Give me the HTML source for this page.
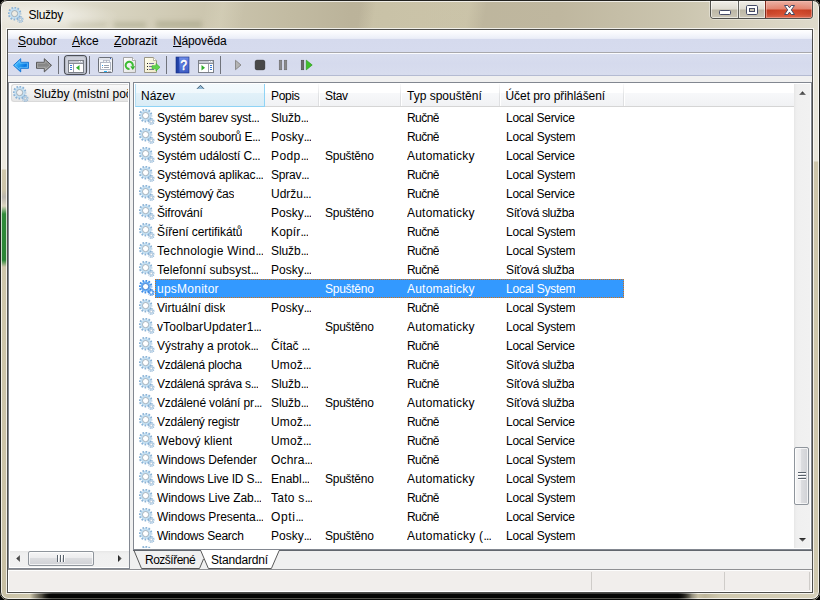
<!DOCTYPE html>
<html lang="cs"><head><meta charset="utf-8"><title>Služby</title>
<style>
*,*::before,*::after{box-sizing:border-box;margin:0;padding:0}
html,body{width:820px;height:600px;overflow:hidden;background:#000}
body{font-family:"Liberation Sans","DejaVu Sans",sans-serif;font-size:12px;color:#000;position:relative}
.abs{position:absolute}
/* ---------- window frame ---------- */
#frame{left:0;top:0;width:820px;height:600px;border-radius:7px 7px 8px 8px;overflow:hidden;background:#cdc5aa}
#ftop{left:0;top:0;width:820px;height:30px;background:linear-gradient(90deg,#e8e5da 0px,#e5e2d5 55px,#d9d5c2 105px,#cec8b1 190px,#c2bba2 290px,#bbb39a 350px,#bdb59c 420px,#bfb79f 560px,#cbc5af 680px,#d8d3c1 760px,#dedacb 820px)}
#fleft{left:0;top:30px;width:8px;height:570px;background:linear-gradient(#ece9df 0,#ece9df 139px,#cfc7ab 140px,#cbc3a8 160px,#b9b6ae 167px,#dcd6c2 176px,#2f8a3a 184px,#2a8535 230px,#cfc7ab 237px,#cac2a6 520px,#c6bea2 570px)}
#fright{left:812px;top:30px;width:8px;height:570px;background:linear-gradient(#e9e6da 0,#e9e6da 131px,#cdc5aa 132px,#cfc8ae 570px)}
#fbot{left:0;top:592px;width:820px;height:8px;background:linear-gradient(90deg,#c9c1a5 0,#cfc8ae 30px,#a49d86 42px,#0a0a08 50px,#000 675px,#5a5648 683px,#cfc8ae 692px,#bdb59a 705px,#cfc8ae 720px,#d6d0ba 820px)}
#rim{left:0;top:0;width:820px;height:600px;border-radius:7px 7px 8px 8px;border:1px solid #22221f;box-shadow:inset 0 0 0 1px rgba(255,255,255,.72)}
#inner{left:6px;top:28px;width:808px;height:566px;border:1px solid rgba(255,255,255,.75)}
#inner2{left:7px;top:29px;width:806px;height:564px;border:1px solid #4e4e4c}
#client{left:8px;top:30px;width:804px;height:562px;background:#f0f0f0}
#title{left:28.500px;top:7px;font-size:12px;line-height:16px;color:#000;letter-spacing:-.25px}
#titleglow{left:0px;top:2px;width:120px;height:27px;background:radial-gradient(ellipse at 40% 50%,rgba(255,255,255,.5),rgba(255,255,255,0) 70%)}
/* ---------- menu / toolbar ---------- */
#menubar{left:8px;top:30px;width:804px;height:22px;background:linear-gradient(#ffffff 0px,#f9fafd 3px,#eceff8 8px,#e6e9f5 9px,#d5daed 9px,#d6dbee 22px)}
#menuline{left:8px;top:52px;width:804px;height:1px;background:#a8a8ac}
.mi{position:absolute;top:33px;line-height:16px;font-size:12px}
.mi u{text-decoration:underline;text-underline-offset:1px}
#toolbar{left:8px;top:53px;width:804px;height:23px;background:linear-gradient(#fbfcfe 0px,#fbfcfe 1px,#d9deef 1px,#d5daed 10px,#d8ddee 22px,#b4bbd2 22px,#b4bbd2 23px)}
/* ---------- panels ---------- */
#tree{left:8px;top:82px;width:122px;height:487px;background:#fff;border:1px solid #828790}
#treeitem{left:11px;top:84px;width:117px;height:18px;border:1px solid #d9d9d9;border-right:none;border-radius:3px 0 0 3px;background:linear-gradient(#f9f9f9,#e6e6e6)}
#treetext{left:33.500px;top:86px;line-height:16px;width:94.500px;letter-spacing:-.02px;overflow:hidden;white-space:nowrap}
#list{left:133px;top:82px;width:679px;height:468px;background:#fff;border:1px solid #828790}
#hdr{left:135px;top:84px;width:659px;height:23px;background:linear-gradient(#fff 0,#fff 9px,#f7f8fa 9px,#f1f2f4 22px);border-bottom:1px solid #d5d5d5}
#hdrsort{left:135px;top:84px;width:130px;height:23px;background:linear-gradient(#f3fafd 0,#f0f8fc 9px,#e2f1f9 9px,#d9ecf6 22px);border:1px solid #8fd3f5;border-top:none;border-left-color:#b5e0f6}
.hsep{position:absolute;top:84px;width:2px;height:22px;background:linear-gradient(90deg,#dfe0e2 0,#dfe0e2 1px,#fff 1px);-webkit-mask-image:linear-gradient(transparent,#000 50%);mask-image:linear-gradient(rgba(0,0,0,.2),#000 60%)}
.ht{position:absolute;top:88px;line-height:16px;color:#000}
.row{position:absolute;left:134px;width:490px;height:19px;line-height:20px;white-space:nowrap}
.row .gear{position:absolute;left:5px;top:1px}
.c{position:absolute;top:0;height:19px;overflow:hidden}
.c1{left:23px}.c2{left:137px}.c3{left:191px}.c4{left:273px}.c5{left:372px}
.e{letter-spacing:-.75px !important}
.row.sel::before{content:"";position:absolute;left:21px;top:0;width:469px;height:19px;background:#3399ff;border:1px dotted #d07018}
.row.sel .c{color:#fff}
#vscroll{left:794px;top:84px;width:16px;height:464px;background:linear-gradient(90deg,#e6e6e6 0,#eeeeee 2px,#f0f0f0 4px,#f1f1f1 16px)}
#vthumb{left:794px;top:447px;width:15px;height:58px;border:1px solid #8f959c;border-radius:2px;background:linear-gradient(90deg,#f6f6f6 0,#ececee 45%,#dcdde0 50%,#d0d1d5 100%);box-shadow:inset 0 0 0 1px rgba(255,255,255,.7)}
.grip{position:absolute;left:798px;width:8px;height:2px;background:#59626c;border-bottom:1px solid #fff}
#hscroll{left:10px;top:551px;width:119px;height:16px;background:linear-gradient(#e6e6e6 0,#eeeeee 2px,#f0f0f0 4px,#f1f1f1 16px)}
#hthumb{left:28px;top:551px;width:66px;height:15px;border:1px solid #8f959c;border-radius:2px;background:linear-gradient(#f6f6f6 0,#ececee 45%,#dcdde0 50%,#d0d1d5 100%);box-shadow:inset 0 0 0 1px rgba(255,255,255,.7)}
.vgrip{position:absolute;top:555px;width:2px;height:7px;background:#59626c;border-right:1px solid #fff}
#tabs{left:133px;top:550px;width:679px;height:18px;background:#f0f0f0}
#botline{left:8px;top:569px;width:804px;height:1px;background:#8f9093}
#botline2{left:8px;top:570px;width:804px;height:1px;background:#fdfdfd}
#status{left:8px;top:571px;width:804px;height:21px;background:#f1eeec;border:1px solid #fff;border-top:none}
.ssep{position:absolute;top:572px;width:1px;height:18px;background:#cfccc9}
.tab{position:absolute;top:552px;line-height:16px}
/* caption buttons */
#capbtns{left:710px;top:0;width:103px;height:19px;border:1px solid #50504c;border-top:none;border-radius:0 0 4px 4px;overflow:hidden;background:#d6d2c4;box-shadow:0 0 0 1px rgba(255,255,255,.35)}
.cb{position:absolute;top:1px;height:17px;box-shadow:inset 0 0 0 1px rgba(255,255,255,.55)}
#bmin{left:0;width:28px;background:linear-gradient(#f0eee8 0,#dfdcd2 8px,#bcb7a6 9px,#cbc6b6 17px);border-right:1px solid #60605c}
#bmax{left:28px;width:27px;background:linear-gradient(#f0eee8 0,#dfdcd2 8px,#bcb7a6 9px,#cbc6b6 17px);border-right:1px solid #60605c}
#bclose{left:55px;width:46px;background:radial-gradient(ellipse 60% 70% at 50% 75%,rgba(255,100,60,.38),rgba(255,100,60,0) 100%),linear-gradient(#ecb0a2 0,#df8a78 8px,#bf3a20 9px,#c5452b 13px,#d26a54 17px);box-shadow:inset 0 0 0 1px rgba(255,200,190,.45),0 0 0 1px #7e2a1c}
</style></head><body>
<svg width="0" height="0" style="position:absolute"><defs>

<linearGradient id="arv" x1="0" y1="0" x2="0" y2="1"><stop offset="0" stop-color="#1e1e1e"/><stop offset="1" stop-color="#7a7a7a"/></linearGradient><linearGradient id="arh" x1="0" y1="0" x2="1" y2="0"><stop offset="0" stop-color="#1e1e1e"/><stop offset="1" stop-color="#6a6a6a"/></linearGradient>
</defs></svg>
<div id="frame" class="abs">
 <div id="ftop" class="abs"></div><div id="fleft" class="abs"></div><div id="fright" class="abs"></div><div id="fbot" class="abs"></div>
</div>
<div class="abs" style="left:330px;top:0;width:170px;height:30px;background:linear-gradient(100deg,rgba(255,250,215,0) 18%,rgba(255,250,215,.2) 27%,rgba(255,250,215,.2) 80%,rgba(255,250,215,0) 90%)"></div>
<div class="abs" style="left:190px;top:0;width:70px;height:30px;background:linear-gradient(100deg,rgba(255,252,230,0) 20%,rgba(255,252,230,.14) 45%,rgba(255,252,230,0) 75%)"></div>
<div class="abs" style="left:70px;top:22px;width:36px;height:5px;background:#a9a88c;opacity:.32;filter:blur(2.500px)"></div>
<div class="abs" style="left:114px;top:22px;width:32px;height:6px;background:#a3a284;opacity:.5;filter:blur(2.500px)"></div>
<div class="abs" style="left:156px;top:21px;width:46px;height:7px;background:#9f9e80;opacity:.5;filter:blur(2.500px)"></div>
<div id="rim" class="abs"></div>
<div id="inner" class="abs"></div>
<div id="inner2" class="abs"></div>
<div class="abs" style="left:30px;top:593px;width:670px;height:7px;background:linear-gradient(#3c3c3a 0,#3c3c3a 1px,#050504 1px,#050504 5px,#55554f 5px,#55554f 6px,#0a0a0a 6px);-webkit-mask-image:linear-gradient(90deg,transparent 0,#000 22px,#000 648px,transparent 668px);mask-image:linear-gradient(90deg,transparent 0,#000 22px,#000 648px,transparent 668px)"></div>
<div id="titleglow" class="abs"></div>
<svg class="abs" style="left:8px;top:7px" width="16" height="16" viewBox="0 0 16 16"><circle cx="6.600" cy="6.600" r="5.750" fill="none" stroke="#8ab2d5" stroke-width="2.100" stroke-dasharray="1.700 1.311" stroke-dashoffset=".85"/><circle cx="6.600" cy="6.600" r="4.050" fill="none" stroke="#c6e2f4" stroke-width="1.900"/><circle cx="6.600" cy="6.600" r="4.950" fill="none" stroke="#a5cbe9" stroke-width=".4"/><circle cx="6.600" cy="6.600" r="3.100" fill="none" stroke="#7d8a98" stroke-width=".7" stroke-opacity=".85"/><circle cx="12.300" cy="12.500" r="2.700" fill="none" stroke="#88aed0" stroke-width="1.400" stroke-dasharray=".95 .746" stroke-dashoffset=".475"/><circle cx="12.300" cy="12.500" r="1.750" fill="none" stroke="#b2d0e8" stroke-width="1.100"/><circle cx="12.300" cy="12.500" r="1.150" fill="none" stroke="#8c9db0" stroke-width=".35"/></svg>
<div id="title" class="abs">Služby</div>
<div id="capbtns" class="abs">
 <div id="bmin" class="cb"></div><div id="bmax" class="cb"></div><div id="bclose" class="cb"></div>
 <svg class="abs" style="left:0;top:0" width="103" height="20" viewBox="0 0 103 20">
  <rect x="8.500" y="10.500" width="11" height="4" rx=".8" fill="#fff" stroke="#454b66" stroke-width="1"/>
  <rect x="35.500" y="5.500" width="11" height="9" rx="1.200" fill="#fff" stroke="#454b66" stroke-width="1"/>
  <rect x="38.500" y="8.500" width="5" height="3" fill="#cbc6b4" stroke="#454b66" stroke-width="1"/>
  <path d="M73.500 5.500 L76.800 5.500 L78.500 7.800 L80.200 5.500 L83.500 5.500 L80.300 9.900 L83.500 14.500 L80.200 14.500 L78.500 12.100 L76.800 14.500 L73.500 14.500 L76.700 9.900 Z" fill="#fff" stroke="#454b66" stroke-width="1" stroke-linejoin="round"/>
 </svg>
</div>
<div class="abs" style="left:706px;top:0;width:108px;height:1px;background:#2a2a28"></div>
<div id="client" class="abs"></div>
<div id="menubar" class="abs"></div>
<div id="menuline" class="abs"></div>
<span class="mi" style="left:18px"><u>S</u>oubor</span>
<span class="mi" style="left:72px"><u>A</u>kce</span>
<span class="mi" style="left:114px"><u>Z</u>obrazit</span>
<span class="mi" style="left:173px;letter-spacing:-.15px"><u>N</u>ápověda</span>
<div id="toolbar" class="abs"></div>
<svg class="abs" style="left:0;top:0" width="820" height="90" viewBox="0 0 820 90">
<defs>
<linearGradient id="gb" x1="0" y1="0" x2="1" y2=".6"><stop offset="0" stop-color="#6ccfff"/><stop offset=".45" stop-color="#2aa4f6"/><stop offset=".8" stop-color="#0a78e2"/><stop offset="1" stop-color="#2a94f0"/></linearGradient>
<linearGradient id="gg" x1="0" y1="0" x2="0" y2="1"><stop offset="0" stop-color="#8a8a8a"/><stop offset=".5" stop-color="#868686"/><stop offset="1" stop-color="#b4b4b4"/></linearGradient>
<linearGradient id="gq" x1="0" y1="0" x2="1" y2="0"><stop offset="0" stop-color="#1c3c9c"/><stop offset=".25" stop-color="#2747b0"/><stop offset=".3" stop-color="#5f7fe0"/><stop offset="1" stop-color="#4868d0"/></linearGradient>
<linearGradient id="gpg" x1="0" y1="0" x2="1" y2="1"><stop offset="0" stop-color="#ffffff"/><stop offset="1" stop-color="#e0e0e0"/></linearGradient>
<linearGradient id="gpy" x1="0" y1="0" x2="1" y2="1"><stop offset="0" stop-color="#fffef0"/><stop offset="1" stop-color="#efe8c4"/></linearGradient>
<linearGradient id="gqv" x1="0" y1="0" x2="0" y2="1"><stop offset="0" stop-color="#7a98f0" stop-opacity=".7"/><stop offset=".5" stop-color="#5676dc" stop-opacity=".3"/><stop offset="1" stop-color="#2c48b0" stop-opacity=".6"/></linearGradient>
</defs>
<!-- back / forward -->
<path d="M13.500 65.300 L20.700 58.700 L20.700 62.300 L28.500 62.300 L28.500 68.300 L20.700 68.300 L20.700 71.900 Z" fill="url(#gb)" stroke="#1a78d6" stroke-width="1" stroke-linejoin="round"/>
<path d="M15 65.300 L19.800 60.900 L19.800 63.200 L27.600 63.200 L27.600 67.400 L19.800 67.400 L19.800 69.700 Z" fill="none" stroke="#7fd2ff" stroke-opacity=".75" stroke-width=".8" stroke-linejoin="round"/>
<path d="M51.500 65.300 L44.300 58.700 L44.300 62.300 L36.500 62.300 L36.500 68.300 L44.300 68.300 L44.300 71.900 Z" fill="url(#gg)" stroke="#565656" stroke-width="1" stroke-linejoin="round"/>
<path d="M50 65.300 L45.200 60.900 L45.200 63.200 L37.400 63.200 L37.400 67.400 L45.200 67.400 L45.200 69.700 Z" fill="none" stroke="#c4c4c4" stroke-opacity=".6" stroke-width=".8" stroke-linejoin="round"/>
<!-- separators -->
<g fill="#70737c"><rect x="58" y="56" width="1" height="18"/><rect x="89" y="56" width="1" height="18"/><rect x="166" y="56" width="1" height="18"/><rect x="220" y="56" width="1" height="18"/></g>
<!-- pressed button -->
<rect x="64.500" y="55.500" width="22" height="19" rx="3.500" fill="#cdd0da" stroke="#4c4f56" stroke-width="1.200"/>
<rect x="65.500" y="56.500" width="20" height="17" rx="2.500" fill="none" stroke="#b4b8c4" stroke-width="1"/>
<!-- show/hide console tree icon -->
<g>
<rect x="68.500" y="60.500" width="15" height="12" fill="#fff" stroke="#7c8088"/>
<rect x="69" y="61" width="14" height="2" fill="#c4c8d2"/>
<rect x="69" y="63" width="14" height="1" fill="#8a8e98"/>
<rect x="73" y="64" width="1" height="8" fill="#9a9ea8"/>
<rect x="70" y="65" width="2" height="1" fill="#3a7ad8"/><rect x="70" y="67" width="2" height="1" fill="#3a7ad8"/><rect x="70" y="69" width="2" height="1" fill="#3a7ad8"/>
<path d="M79.500 65 L76 67.700 L79.500 70.500 Z" fill="#2fae2a"/>
<rect x="79" y="61" width="1" height="1" fill="#fff"/><rect x="81" y="61" width="1" height="1" fill="#fff"/>
</g>
<!-- properties icon -->
<g>
<rect x="98.500" y="57.500" width="14" height="15" rx="1" fill="#f4f5f8" stroke="#6c7078"/>
<rect x="99" y="58" width="13" height="2" fill="#dfe2ea"/>
<rect x="110" y="58" width="1" height="1" fill="#3a6ad0"/>
<rect x="100.500" y="62.500" width="10" height="7" fill="#fff" stroke="#b0b6c4"/>
<rect x="103.500" y="60.500" width="3" height="2" fill="#f4f5f8" stroke="#b0b6c4" stroke-width=".8"/><rect x="106.500" y="60.500" width="3" height="2" fill="#f4f5f8" stroke="#b0b6c4" stroke-width=".8"/>
<rect x="102" y="65" width="1" height="1" fill="#2a9cf0"/><rect x="104" y="65" width="5" height="1" fill="#9aa0ae"/>
<rect x="102" y="67" width="1" height="1" fill="#9aa0ae"/><rect x="104" y="67" width="5" height="1" fill="#9aa0ae"/>
<rect x="104" y="71" width="3" height="1" fill="#28b0f0"/><rect x="108" y="71" width="3" height="1" fill="#b8bcc6"/>
</g>
<!-- refresh -->
<g>
<path d="M123.500 57.500 L132.500 57.500 L135.500 60.500 L135.500 72.500 L123.500 72.500 Z" fill="url(#gpg)" stroke="#a4a4a4"/>
<path d="M132.500 57.500 L132.500 60.500 L135.500 60.500" fill="#fff" stroke="#9a9a9a" stroke-width=".8"/>
<path d="M132.800 66 A3.600 3.600 0 1 0 129.500 69" fill="none" stroke="#3cbc34" stroke-width="2"/>
<path d="M130.300 66.300 L135.200 66.300 L132.800 70 Z" fill="#34b42c"/>
</g>
<!-- export list -->
<g>
<path d="M144.500 57.500 L153.500 57.500 L156.500 60.500 L156.500 72.500 L144.500 72.500 Z" fill="url(#gpy)" stroke="#9a9684"/>
<path d="M153.500 57.500 L153.500 60.500 L156.500 60.500" fill="#fff" stroke="#a8a494" stroke-width=".8"/>
<rect x="147" y="63" width="1" height="1" fill="#222"/><rect x="147" y="66" width="1" height="1" fill="#222"/><rect x="147" y="69" width="1" height="1" fill="#222"/>
<rect x="149" y="63" width="5" height="1" fill="#76749e"/><rect x="149" y="66" width="4" height="1" fill="#76749e"/><rect x="149" y="69" width="5" height="1" fill="#76749e"/>
<path d="M152 65.700 L156 65.700 L156 63.500 L160 67.200 L156 71 L156 68.800 L152 68.800 Z" fill="#62d44e" stroke="#38b02c" stroke-width=".6"/>
</g>
<!-- help -->
<g>
<rect x="176" y="57" width="13" height="16" fill="url(#gq)"/>
<rect x="179" y="57" width="10" height="16" fill="url(#gqv)"/>
<rect x="176" y="57" width="13" height="16" fill="none" stroke="#1a3088" stroke-width=".6"/>
<text transform="translate(184.300 70.600) scale(.78 1)" font-family="Liberation Sans, sans-serif" font-size="14.800" fill="#1c2f80" fill-opacity=".55" text-anchor="middle">?</text>
<text transform="translate(183.600 70.100) scale(.78 1)" font-family="Liberation Sans, sans-serif" font-size="14.800" fill="#fff" stroke="#fff" stroke-width=".7" text-anchor="middle">?</text>
</g>
<!-- action pane icon -->
<g>
<rect x="198.500" y="60.500" width="15" height="12" fill="#fff" stroke="#7c8088"/>
<rect x="199" y="61" width="14" height="2" fill="#c4c8d2"/>
<rect x="199" y="63" width="14" height="1" fill="#8a8e98"/>
<rect x="208" y="64" width="1" height="8" fill="#9a9ea8"/>
<rect x="210" y="65" width="2" height="1" fill="#3a7ad8"/><rect x="210" y="67" width="2" height="1" fill="#3a7ad8"/><rect x="210" y="69" width="2" height="1" fill="#3a7ad8"/>
<path d="M201.500 65 L205 67.700 L201.500 70.500 Z" fill="#2fae2a"/>
<rect x="209" y="61" width="1" height="1" fill="#fff"/><rect x="211" y="61" width="1" height="1" fill="#fff"/>
</g>
<!-- play (disabled) -->
<path d="M235.500 60.300 L241 65 L235.500 69.700 Z" fill="#b4b4b4" stroke="#848484" stroke-width=".9"/>
<!-- stop -->
<rect x="255.300" y="60.300" width="9.400" height="9.400" rx="1.500" fill="#484848" stroke="#303030" stroke-width=".8"/>
<!-- pause -->
<rect x="279.300" y="60.300" width="2.400" height="9.400" fill="#8a8a8a" stroke="#6e6e6e" stroke-width=".7"/>
<rect x="284.300" y="60.300" width="2.400" height="9.400" fill="#8a8a8a" stroke="#6e6e6e" stroke-width=".7"/>
<!-- resume -->
<rect x="301.300" y="60.300" width="2.400" height="9.400" fill="#6a6a6a" stroke="#4e4e4e" stroke-width=".7"/>
<path d="M306.300 60.200 L312.200 65 L306.300 69.800 Z" fill="#3fc02a" stroke="#2a9a1a" stroke-width=".7"/>
</svg>

<div id="tree" class="abs"></div>
<div id="treeitem" class="abs"></div>
<svg class="abs" style="left:13px;top:86px" width="16" height="16" viewBox="0 0 16 16"><circle cx="6.600" cy="6.600" r="5.750" fill="none" stroke="#8ab2d5" stroke-width="2.100" stroke-dasharray="1.700 1.311" stroke-dashoffset=".85"/><circle cx="6.600" cy="6.600" r="4.050" fill="none" stroke="#c6e2f4" stroke-width="1.900"/><circle cx="6.600" cy="6.600" r="4.950" fill="none" stroke="#a5cbe9" stroke-width=".4"/><circle cx="6.600" cy="6.600" r="3.100" fill="none" stroke="#7d8a98" stroke-width=".7" stroke-opacity=".85"/><circle cx="12.300" cy="12.500" r="2.700" fill="none" stroke="#88aed0" stroke-width="1.400" stroke-dasharray=".95 .746" stroke-dashoffset=".475"/><circle cx="12.300" cy="12.500" r="1.750" fill="none" stroke="#b2d0e8" stroke-width="1.100"/><circle cx="12.300" cy="12.500" r="1.150" fill="none" stroke="#8c9db0" stroke-width=".35"/></svg>
<div id="treetext" class="abs">Služby (místní počítač)</div>
<div id="list" class="abs"></div>
<div id="hdr" class="abs"></div>
<div id="hdrsort" class="abs"></div>
<div class="hsep" style="left:318px"></div>
<div class="hsep" style="left:400px"></div>
<div class="hsep" style="left:499px"></div>
<div class="hsep" style="left:623px"></div>
<svg class="abs" style="left:196px;top:84px" width="9" height="6" viewBox="0 0 9 6"><path d="M1.200 5 L4.500 1.600 L7.800 5 Z" fill="#93bbd6"/><path d="M1 4.800 L4.500 1.300 L8 4.800" fill="none" stroke="#38566f" stroke-width="1"/></svg>
<span class="ht" style="left:141px">Název</span>
<span class="ht" style="left:271px;letter-spacing:-.3px">Popis</span>
<span class="ht" style="left:325px;letter-spacing:-.35px">Stav</span>
<span class="ht" style="left:407px">Typ spouštění</span>
<span class="ht" style="left:505.500px;letter-spacing:-.06px">Účet pro přihlášení</span>
<div class="row" style="top:108px"><svg class="gear" width="16" height="16" viewBox="0 0 16 16"><circle cx="6.600" cy="6.600" r="5.750" fill="none" stroke="#8ab2d5" stroke-width="2.100" stroke-dasharray="1.700 1.311" stroke-dashoffset=".85"/><circle cx="6.600" cy="6.600" r="4.050" fill="none" stroke="#c6e2f4" stroke-width="1.900"/><circle cx="6.600" cy="6.600" r="4.950" fill="none" stroke="#a5cbe9" stroke-width=".4"/><circle cx="6.600" cy="6.600" r="3.100" fill="none" stroke="#7d8a98" stroke-width=".7" stroke-opacity=".85"/><circle cx="12.300" cy="12.500" r="2.700" fill="none" stroke="#88aed0" stroke-width="1.400" stroke-dasharray=".95 .746" stroke-dashoffset=".475"/><circle cx="12.300" cy="12.500" r="1.750" fill="none" stroke="#b2d0e8" stroke-width="1.100"/><circle cx="12.300" cy="12.500" r="1.150" fill="none" stroke="#8c9db0" stroke-width=".35"/></svg><span class="c c1" style="letter-spacing:-0.224px;">Systém barev syst<span class="e">...</span></span><span class="c c2" style="letter-spacing:-0.080px;">Služb<span class="e">...</span></span><span class="c c4" style="letter-spacing:-0.550px;">Ručně</span><span class="c c5" style="letter-spacing:-0.258px;">Local Service</span></div>
<div class="row" style="top:127px"><svg class="gear" width="16" height="16" viewBox="0 0 16 16"><circle cx="6.600" cy="6.600" r="5.750" fill="none" stroke="#8ab2d5" stroke-width="2.100" stroke-dasharray="1.700 1.311" stroke-dashoffset=".85"/><circle cx="6.600" cy="6.600" r="4.050" fill="none" stroke="#c6e2f4" stroke-width="1.900"/><circle cx="6.600" cy="6.600" r="4.950" fill="none" stroke="#a5cbe9" stroke-width=".4"/><circle cx="6.600" cy="6.600" r="3.100" fill="none" stroke="#7d8a98" stroke-width=".7" stroke-opacity=".85"/><circle cx="12.300" cy="12.500" r="2.700" fill="none" stroke="#88aed0" stroke-width="1.400" stroke-dasharray=".95 .746" stroke-dashoffset=".475"/><circle cx="12.300" cy="12.500" r="1.750" fill="none" stroke="#b2d0e8" stroke-width="1.100"/><circle cx="12.300" cy="12.500" r="1.150" fill="none" stroke="#8c9db0" stroke-width=".35"/></svg><span class="c c1" style="letter-spacing:-0.175px;">Systém souborů E<span class="e">...</span></span><span class="c c2">Posky<span class="e">...</span></span><span class="c c4" style="letter-spacing:-0.550px;">Ručně</span><span class="c c5" style="letter-spacing:-0.227px;">Local System</span></div>
<div class="row" style="top:146px"><svg class="gear" width="16" height="16" viewBox="0 0 16 16"><circle cx="6.600" cy="6.600" r="5.750" fill="none" stroke="#8ab2d5" stroke-width="2.100" stroke-dasharray="1.700 1.311" stroke-dashoffset=".85"/><circle cx="6.600" cy="6.600" r="4.050" fill="none" stroke="#c6e2f4" stroke-width="1.900"/><circle cx="6.600" cy="6.600" r="4.950" fill="none" stroke="#a5cbe9" stroke-width=".4"/><circle cx="6.600" cy="6.600" r="3.100" fill="none" stroke="#7d8a98" stroke-width=".7" stroke-opacity=".85"/><circle cx="12.300" cy="12.500" r="2.700" fill="none" stroke="#88aed0" stroke-width="1.400" stroke-dasharray=".95 .746" stroke-dashoffset=".475"/><circle cx="12.300" cy="12.500" r="1.750" fill="none" stroke="#b2d0e8" stroke-width="1.100"/><circle cx="12.300" cy="12.500" r="1.150" fill="none" stroke="#8c9db0" stroke-width=".35"/></svg><span class="c c1" style="letter-spacing:-0.141px;">Systém událostí C<span class="e">...</span></span><span class="c c2" style="letter-spacing:0.400px;">Podp<span class="e">...</span></span><span class="c c3" style="letter-spacing:-0.271px;">Spuštěno</span><span class="c c4" style="letter-spacing:0.210px;">Automaticky</span><span class="c c5" style="letter-spacing:-0.258px;">Local Service</span></div>
<div class="row" style="top:165px"><svg class="gear" width="16" height="16" viewBox="0 0 16 16"><circle cx="6.600" cy="6.600" r="5.750" fill="none" stroke="#8ab2d5" stroke-width="2.100" stroke-dasharray="1.700 1.311" stroke-dashoffset=".85"/><circle cx="6.600" cy="6.600" r="4.050" fill="none" stroke="#c6e2f4" stroke-width="1.900"/><circle cx="6.600" cy="6.600" r="4.950" fill="none" stroke="#a5cbe9" stroke-width=".4"/><circle cx="6.600" cy="6.600" r="3.100" fill="none" stroke="#7d8a98" stroke-width=".7" stroke-opacity=".85"/><circle cx="12.300" cy="12.500" r="2.700" fill="none" stroke="#88aed0" stroke-width="1.400" stroke-dasharray=".95 .746" stroke-dashoffset=".475"/><circle cx="12.300" cy="12.500" r="1.750" fill="none" stroke="#b2d0e8" stroke-width="1.100"/><circle cx="12.300" cy="12.500" r="1.150" fill="none" stroke="#8c9db0" stroke-width=".35"/></svg><span class="c c1" style="letter-spacing:-0.094px;">Systémová aplikac<span class="e">...</span></span><span class="c c2" style="letter-spacing:-0.240px;">Sprav<span class="e">...</span></span><span class="c c4" style="letter-spacing:-0.550px;">Ručně</span><span class="c c5" style="letter-spacing:-0.227px;">Local System</span></div>
<div class="row" style="top:184px"><svg class="gear" width="16" height="16" viewBox="0 0 16 16"><circle cx="6.600" cy="6.600" r="5.750" fill="none" stroke="#8ab2d5" stroke-width="2.100" stroke-dasharray="1.700 1.311" stroke-dashoffset=".85"/><circle cx="6.600" cy="6.600" r="4.050" fill="none" stroke="#c6e2f4" stroke-width="1.900"/><circle cx="6.600" cy="6.600" r="4.950" fill="none" stroke="#a5cbe9" stroke-width=".4"/><circle cx="6.600" cy="6.600" r="3.100" fill="none" stroke="#7d8a98" stroke-width=".7" stroke-opacity=".85"/><circle cx="12.300" cy="12.500" r="2.700" fill="none" stroke="#88aed0" stroke-width="1.400" stroke-dasharray=".95 .746" stroke-dashoffset=".475"/><circle cx="12.300" cy="12.500" r="1.750" fill="none" stroke="#b2d0e8" stroke-width="1.100"/><circle cx="12.300" cy="12.500" r="1.150" fill="none" stroke="#8c9db0" stroke-width=".35"/></svg><span class="c c1" style="letter-spacing:-0.267px;">Systémový čas</span><span class="c c2">Udržu<span class="e">...</span></span><span class="c c4" style="letter-spacing:-0.550px;">Ručně</span><span class="c c5" style="letter-spacing:-0.258px;">Local Service</span></div>
<div class="row" style="top:203px"><svg class="gear" width="16" height="16" viewBox="0 0 16 16"><circle cx="6.600" cy="6.600" r="5.750" fill="none" stroke="#8ab2d5" stroke-width="2.100" stroke-dasharray="1.700 1.311" stroke-dashoffset=".85"/><circle cx="6.600" cy="6.600" r="4.050" fill="none" stroke="#c6e2f4" stroke-width="1.900"/><circle cx="6.600" cy="6.600" r="4.950" fill="none" stroke="#a5cbe9" stroke-width=".4"/><circle cx="6.600" cy="6.600" r="3.100" fill="none" stroke="#7d8a98" stroke-width=".7" stroke-opacity=".85"/><circle cx="12.300" cy="12.500" r="2.700" fill="none" stroke="#88aed0" stroke-width="1.400" stroke-dasharray=".95 .746" stroke-dashoffset=".475"/><circle cx="12.300" cy="12.500" r="1.750" fill="none" stroke="#b2d0e8" stroke-width="1.100"/><circle cx="12.300" cy="12.500" r="1.150" fill="none" stroke="#8c9db0" stroke-width=".35"/></svg><span class="c c1" style="letter-spacing:-0.175px;">Šifrování</span><span class="c c2">Posky<span class="e">...</span></span><span class="c c3" style="letter-spacing:-0.271px;">Spuštěno</span><span class="c c4" style="letter-spacing:0.210px;">Automaticky</span><span class="c c5" style="letter-spacing:-0.375px;">Síťová služba</span></div>
<div class="row" style="top:222px"><svg class="gear" width="16" height="16" viewBox="0 0 16 16"><circle cx="6.600" cy="6.600" r="5.750" fill="none" stroke="#8ab2d5" stroke-width="2.100" stroke-dasharray="1.700 1.311" stroke-dashoffset=".85"/><circle cx="6.600" cy="6.600" r="4.050" fill="none" stroke="#c6e2f4" stroke-width="1.900"/><circle cx="6.600" cy="6.600" r="4.950" fill="none" stroke="#a5cbe9" stroke-width=".4"/><circle cx="6.600" cy="6.600" r="3.100" fill="none" stroke="#7d8a98" stroke-width=".7" stroke-opacity=".85"/><circle cx="12.300" cy="12.500" r="2.700" fill="none" stroke="#88aed0" stroke-width="1.400" stroke-dasharray=".95 .746" stroke-dashoffset=".475"/><circle cx="12.300" cy="12.500" r="1.750" fill="none" stroke="#b2d0e8" stroke-width="1.100"/><circle cx="12.300" cy="12.500" r="1.150" fill="none" stroke="#8c9db0" stroke-width=".35"/></svg><span class="c c1" style="letter-spacing:-0.076px;">Šíření certifikátů</span><span class="c c2" style="letter-spacing:0.160px;">Kopír<span class="e">...</span></span><span class="c c4" style="letter-spacing:-0.550px;">Ručně</span><span class="c c5" style="letter-spacing:-0.227px;">Local System</span></div>
<div class="row" style="top:241px"><svg class="gear" width="16" height="16" viewBox="0 0 16 16"><circle cx="6.600" cy="6.600" r="5.750" fill="none" stroke="#8ab2d5" stroke-width="2.100" stroke-dasharray="1.700 1.311" stroke-dashoffset=".85"/><circle cx="6.600" cy="6.600" r="4.050" fill="none" stroke="#c6e2f4" stroke-width="1.900"/><circle cx="6.600" cy="6.600" r="4.950" fill="none" stroke="#a5cbe9" stroke-width=".4"/><circle cx="6.600" cy="6.600" r="3.100" fill="none" stroke="#7d8a98" stroke-width=".7" stroke-opacity=".85"/><circle cx="12.300" cy="12.500" r="2.700" fill="none" stroke="#88aed0" stroke-width="1.400" stroke-dasharray=".95 .746" stroke-dashoffset=".475"/><circle cx="12.300" cy="12.500" r="1.750" fill="none" stroke="#b2d0e8" stroke-width="1.100"/><circle cx="12.300" cy="12.500" r="1.150" fill="none" stroke="#8c9db0" stroke-width=".35"/></svg><span class="c c1" style="letter-spacing:0.238px;">Technologie Wind<span class="e">...</span></span><span class="c c2" style="letter-spacing:-0.080px;">Služb<span class="e">...</span></span><span class="c c4" style="letter-spacing:-0.550px;">Ručně</span><span class="c c5" style="letter-spacing:-0.227px;">Local System</span></div>
<div class="row" style="top:260px"><svg class="gear" width="16" height="16" viewBox="0 0 16 16"><circle cx="6.600" cy="6.600" r="5.750" fill="none" stroke="#8ab2d5" stroke-width="2.100" stroke-dasharray="1.700 1.311" stroke-dashoffset=".85"/><circle cx="6.600" cy="6.600" r="4.050" fill="none" stroke="#c6e2f4" stroke-width="1.900"/><circle cx="6.600" cy="6.600" r="4.950" fill="none" stroke="#a5cbe9" stroke-width=".4"/><circle cx="6.600" cy="6.600" r="3.100" fill="none" stroke="#7d8a98" stroke-width=".7" stroke-opacity=".85"/><circle cx="12.300" cy="12.500" r="2.700" fill="none" stroke="#88aed0" stroke-width="1.400" stroke-dasharray=".95 .746" stroke-dashoffset=".475"/><circle cx="12.300" cy="12.500" r="1.750" fill="none" stroke="#b2d0e8" stroke-width="1.100"/><circle cx="12.300" cy="12.500" r="1.150" fill="none" stroke="#8c9db0" stroke-width=".35"/></svg><span class="c c1" style="letter-spacing:0.053px;">Telefonní subsyst<span class="e">...</span></span><span class="c c2">Posky<span class="e">...</span></span><span class="c c4" style="letter-spacing:-0.550px;">Ručně</span><span class="c c5" style="letter-spacing:-0.375px;">Síťová služba</span></div>
<div class="row sel" style="top:279px"><svg class="gear" width="16" height="16" viewBox="0 0 16 16"><circle cx="6.600" cy="6.600" r="5.750" fill="none" stroke="#3f8ce6" stroke-width="2.100" stroke-dasharray="1.700 1.311" stroke-dashoffset=".85"/><circle cx="6.600" cy="6.600" r="4.050" fill="none" stroke="#6ab0f8" stroke-width="1.900"/><circle cx="6.600" cy="6.600" r="3.100" fill="none" stroke="#2f6fc8" stroke-width=".8"/><circle cx="12.300" cy="12.500" r="2.700" fill="none" stroke="#2f7cdc" stroke-width="1.400" stroke-dasharray=".95 .746" stroke-dashoffset=".475"/><circle cx="12.300" cy="12.500" r="1.750" fill="none" stroke="#4a96ee" stroke-width="1.100"/></svg><span class="c c1" style="letter-spacing:0.244px;">upsMonitor</span><span class="c c3" style="letter-spacing:-0.271px;">Spuštěno</span><span class="c c4" style="letter-spacing:0.210px;">Automaticky</span><span class="c c5" style="letter-spacing:-0.227px;">Local System</span></div>
<div class="row" style="top:298px"><svg class="gear" width="16" height="16" viewBox="0 0 16 16"><circle cx="6.600" cy="6.600" r="5.750" fill="none" stroke="#8ab2d5" stroke-width="2.100" stroke-dasharray="1.700 1.311" stroke-dashoffset=".85"/><circle cx="6.600" cy="6.600" r="4.050" fill="none" stroke="#c6e2f4" stroke-width="1.900"/><circle cx="6.600" cy="6.600" r="4.950" fill="none" stroke="#a5cbe9" stroke-width=".4"/><circle cx="6.600" cy="6.600" r="3.100" fill="none" stroke="#7d8a98" stroke-width=".7" stroke-opacity=".85"/><circle cx="12.300" cy="12.500" r="2.700" fill="none" stroke="#88aed0" stroke-width="1.400" stroke-dasharray=".95 .746" stroke-dashoffset=".475"/><circle cx="12.300" cy="12.500" r="1.750" fill="none" stroke="#b2d0e8" stroke-width="1.100"/><circle cx="12.300" cy="12.500" r="1.150" fill="none" stroke="#8c9db0" stroke-width=".35"/></svg><span class="c c1">Virtuální disk</span><span class="c c2">Posky<span class="e">...</span></span><span class="c c4" style="letter-spacing:-0.550px;">Ručně</span><span class="c c5" style="letter-spacing:-0.227px;">Local System</span></div>
<div class="row" style="top:317px"><svg class="gear" width="16" height="16" viewBox="0 0 16 16"><circle cx="6.600" cy="6.600" r="5.750" fill="none" stroke="#8ab2d5" stroke-width="2.100" stroke-dasharray="1.700 1.311" stroke-dashoffset=".85"/><circle cx="6.600" cy="6.600" r="4.050" fill="none" stroke="#c6e2f4" stroke-width="1.900"/><circle cx="6.600" cy="6.600" r="4.950" fill="none" stroke="#a5cbe9" stroke-width=".4"/><circle cx="6.600" cy="6.600" r="3.100" fill="none" stroke="#7d8a98" stroke-width=".7" stroke-opacity=".85"/><circle cx="12.300" cy="12.500" r="2.700" fill="none" stroke="#88aed0" stroke-width="1.400" stroke-dasharray=".95 .746" stroke-dashoffset=".475"/><circle cx="12.300" cy="12.500" r="1.750" fill="none" stroke="#b2d0e8" stroke-width="1.100"/><circle cx="12.300" cy="12.500" r="1.150" fill="none" stroke="#8c9db0" stroke-width=".35"/></svg><span class="c c1" style="letter-spacing:0.106px;">vToolbarUpdater1<span class="e">...</span></span><span class="c c3" style="letter-spacing:-0.271px;">Spuštěno</span><span class="c c4" style="letter-spacing:0.210px;">Automaticky</span><span class="c c5" style="letter-spacing:-0.227px;">Local System</span></div>
<div class="row" style="top:336px"><svg class="gear" width="16" height="16" viewBox="0 0 16 16"><circle cx="6.600" cy="6.600" r="5.750" fill="none" stroke="#8ab2d5" stroke-width="2.100" stroke-dasharray="1.700 1.311" stroke-dashoffset=".85"/><circle cx="6.600" cy="6.600" r="4.050" fill="none" stroke="#c6e2f4" stroke-width="1.900"/><circle cx="6.600" cy="6.600" r="4.950" fill="none" stroke="#a5cbe9" stroke-width=".4"/><circle cx="6.600" cy="6.600" r="3.100" fill="none" stroke="#7d8a98" stroke-width=".7" stroke-opacity=".85"/><circle cx="12.300" cy="12.500" r="2.700" fill="none" stroke="#88aed0" stroke-width="1.400" stroke-dasharray=".95 .746" stroke-dashoffset=".475"/><circle cx="12.300" cy="12.500" r="1.750" fill="none" stroke="#b2d0e8" stroke-width="1.100"/><circle cx="12.300" cy="12.500" r="1.150" fill="none" stroke="#8c9db0" stroke-width=".35"/></svg><span class="c c1">Výstrahy a protok<span class="e">...</span></span><span class="c c2" style="letter-spacing:-0.100px;">Čítač <span class="e">...</span></span><span class="c c4" style="letter-spacing:-0.550px;">Ručně</span><span class="c c5" style="letter-spacing:-0.258px;">Local Service</span></div>
<div class="row" style="top:355px"><svg class="gear" width="16" height="16" viewBox="0 0 16 16"><circle cx="6.600" cy="6.600" r="5.750" fill="none" stroke="#8ab2d5" stroke-width="2.100" stroke-dasharray="1.700 1.311" stroke-dashoffset=".85"/><circle cx="6.600" cy="6.600" r="4.050" fill="none" stroke="#c6e2f4" stroke-width="1.900"/><circle cx="6.600" cy="6.600" r="4.950" fill="none" stroke="#a5cbe9" stroke-width=".4"/><circle cx="6.600" cy="6.600" r="3.100" fill="none" stroke="#7d8a98" stroke-width=".7" stroke-opacity=".85"/><circle cx="12.300" cy="12.500" r="2.700" fill="none" stroke="#88aed0" stroke-width="1.400" stroke-dasharray=".95 .746" stroke-dashoffset=".475"/><circle cx="12.300" cy="12.500" r="1.750" fill="none" stroke="#b2d0e8" stroke-width="1.100"/><circle cx="12.300" cy="12.500" r="1.150" fill="none" stroke="#8c9db0" stroke-width=".35"/></svg><span class="c c1" style="letter-spacing:-0.271px;">Vzdálená plocha</span><span class="c c2" style="letter-spacing:0.175px;">Umož<span class="e">...</span></span><span class="c c4" style="letter-spacing:-0.550px;">Ručně</span><span class="c c5" style="letter-spacing:-0.375px;">Síťová služba</span></div>
<div class="row" style="top:374px"><svg class="gear" width="16" height="16" viewBox="0 0 16 16"><circle cx="6.600" cy="6.600" r="5.750" fill="none" stroke="#8ab2d5" stroke-width="2.100" stroke-dasharray="1.700 1.311" stroke-dashoffset=".85"/><circle cx="6.600" cy="6.600" r="4.050" fill="none" stroke="#c6e2f4" stroke-width="1.900"/><circle cx="6.600" cy="6.600" r="4.950" fill="none" stroke="#a5cbe9" stroke-width=".4"/><circle cx="6.600" cy="6.600" r="3.100" fill="none" stroke="#7d8a98" stroke-width=".7" stroke-opacity=".85"/><circle cx="12.300" cy="12.500" r="2.700" fill="none" stroke="#88aed0" stroke-width="1.400" stroke-dasharray=".95 .746" stroke-dashoffset=".475"/><circle cx="12.300" cy="12.500" r="1.750" fill="none" stroke="#b2d0e8" stroke-width="1.100"/><circle cx="12.300" cy="12.500" r="1.150" fill="none" stroke="#8c9db0" stroke-width=".35"/></svg><span class="c c1" style="letter-spacing:-0.300px;">Vzdálená správa s<span class="e">...</span></span><span class="c c2" style="letter-spacing:-0.080px;">Služb<span class="e">...</span></span><span class="c c4" style="letter-spacing:-0.550px;">Ručně</span><span class="c c5" style="letter-spacing:-0.375px;">Síťová služba</span></div>
<div class="row" style="top:393px"><svg class="gear" width="16" height="16" viewBox="0 0 16 16"><circle cx="6.600" cy="6.600" r="5.750" fill="none" stroke="#8ab2d5" stroke-width="2.100" stroke-dasharray="1.700 1.311" stroke-dashoffset=".85"/><circle cx="6.600" cy="6.600" r="4.050" fill="none" stroke="#c6e2f4" stroke-width="1.900"/><circle cx="6.600" cy="6.600" r="4.950" fill="none" stroke="#a5cbe9" stroke-width=".4"/><circle cx="6.600" cy="6.600" r="3.100" fill="none" stroke="#7d8a98" stroke-width=".7" stroke-opacity=".85"/><circle cx="12.300" cy="12.500" r="2.700" fill="none" stroke="#88aed0" stroke-width="1.400" stroke-dasharray=".95 .746" stroke-dashoffset=".475"/><circle cx="12.300" cy="12.500" r="1.750" fill="none" stroke="#b2d0e8" stroke-width="1.100"/><circle cx="12.300" cy="12.500" r="1.150" fill="none" stroke="#8c9db0" stroke-width=".35"/></svg><span class="c c1" style="letter-spacing:-0.139px;">Vzdálené volání pr<span class="e">...</span></span><span class="c c2" style="letter-spacing:-0.080px;">Služb<span class="e">...</span></span><span class="c c3" style="letter-spacing:-0.271px;">Spuštěno</span><span class="c c4" style="letter-spacing:0.210px;">Automaticky</span><span class="c c5" style="letter-spacing:-0.375px;">Síťová služba</span></div>
<div class="row" style="top:412px"><svg class="gear" width="16" height="16" viewBox="0 0 16 16"><circle cx="6.600" cy="6.600" r="5.750" fill="none" stroke="#8ab2d5" stroke-width="2.100" stroke-dasharray="1.700 1.311" stroke-dashoffset=".85"/><circle cx="6.600" cy="6.600" r="4.050" fill="none" stroke="#c6e2f4" stroke-width="1.900"/><circle cx="6.600" cy="6.600" r="4.950" fill="none" stroke="#a5cbe9" stroke-width=".4"/><circle cx="6.600" cy="6.600" r="3.100" fill="none" stroke="#7d8a98" stroke-width=".7" stroke-opacity=".85"/><circle cx="12.300" cy="12.500" r="2.700" fill="none" stroke="#88aed0" stroke-width="1.400" stroke-dasharray=".95 .746" stroke-dashoffset=".475"/><circle cx="12.300" cy="12.500" r="1.750" fill="none" stroke="#b2d0e8" stroke-width="1.100"/><circle cx="12.300" cy="12.500" r="1.150" fill="none" stroke="#8c9db0" stroke-width=".35"/></svg><span class="c c1" style="letter-spacing:-0.213px;">Vzdálený registr</span><span class="c c2" style="letter-spacing:0.175px;">Umož<span class="e">...</span></span><span class="c c4" style="letter-spacing:-0.550px;">Ručně</span><span class="c c5" style="letter-spacing:-0.258px;">Local Service</span></div>
<div class="row" style="top:431px"><svg class="gear" width="16" height="16" viewBox="0 0 16 16"><circle cx="6.600" cy="6.600" r="5.750" fill="none" stroke="#8ab2d5" stroke-width="2.100" stroke-dasharray="1.700 1.311" stroke-dashoffset=".85"/><circle cx="6.600" cy="6.600" r="4.050" fill="none" stroke="#c6e2f4" stroke-width="1.900"/><circle cx="6.600" cy="6.600" r="4.950" fill="none" stroke="#a5cbe9" stroke-width=".4"/><circle cx="6.600" cy="6.600" r="3.100" fill="none" stroke="#7d8a98" stroke-width=".7" stroke-opacity=".85"/><circle cx="12.300" cy="12.500" r="2.700" fill="none" stroke="#88aed0" stroke-width="1.400" stroke-dasharray=".95 .746" stroke-dashoffset=".475"/><circle cx="12.300" cy="12.500" r="1.750" fill="none" stroke="#b2d0e8" stroke-width="1.100"/><circle cx="12.300" cy="12.500" r="1.150" fill="none" stroke="#8c9db0" stroke-width=".35"/></svg><span class="c c1" style="letter-spacing:0.067px;">Webový klient</span><span class="c c2" style="letter-spacing:0.175px;">Umož<span class="e">...</span></span><span class="c c4" style="letter-spacing:-0.550px;">Ručně</span><span class="c c5" style="letter-spacing:-0.258px;">Local Service</span></div>
<div class="row" style="top:450px"><svg class="gear" width="16" height="16" viewBox="0 0 16 16"><circle cx="6.600" cy="6.600" r="5.750" fill="none" stroke="#8ab2d5" stroke-width="2.100" stroke-dasharray="1.700 1.311" stroke-dashoffset=".85"/><circle cx="6.600" cy="6.600" r="4.050" fill="none" stroke="#c6e2f4" stroke-width="1.900"/><circle cx="6.600" cy="6.600" r="4.950" fill="none" stroke="#a5cbe9" stroke-width=".4"/><circle cx="6.600" cy="6.600" r="3.100" fill="none" stroke="#7d8a98" stroke-width=".7" stroke-opacity=".85"/><circle cx="12.300" cy="12.500" r="2.700" fill="none" stroke="#88aed0" stroke-width="1.400" stroke-dasharray=".95 .746" stroke-dashoffset=".475"/><circle cx="12.300" cy="12.500" r="1.750" fill="none" stroke="#b2d0e8" stroke-width="1.100"/><circle cx="12.300" cy="12.500" r="1.150" fill="none" stroke="#8c9db0" stroke-width=".35"/></svg><span class="c c1" style="letter-spacing:-0.100px;">Windows Defender</span><span class="c c2" style="letter-spacing:0.160px;">Ochra<span class="e">...</span></span><span class="c c4" style="letter-spacing:-0.550px;">Ručně</span><span class="c c5" style="letter-spacing:-0.227px;">Local System</span></div>
<div class="row" style="top:469px"><svg class="gear" width="16" height="16" viewBox="0 0 16 16"><circle cx="6.600" cy="6.600" r="5.750" fill="none" stroke="#8ab2d5" stroke-width="2.100" stroke-dasharray="1.700 1.311" stroke-dashoffset=".85"/><circle cx="6.600" cy="6.600" r="4.050" fill="none" stroke="#c6e2f4" stroke-width="1.900"/><circle cx="6.600" cy="6.600" r="4.950" fill="none" stroke="#a5cbe9" stroke-width=".4"/><circle cx="6.600" cy="6.600" r="3.100" fill="none" stroke="#7d8a98" stroke-width=".7" stroke-opacity=".85"/><circle cx="12.300" cy="12.500" r="2.700" fill="none" stroke="#88aed0" stroke-width="1.400" stroke-dasharray=".95 .746" stroke-dashoffset=".475"/><circle cx="12.300" cy="12.500" r="1.750" fill="none" stroke="#b2d0e8" stroke-width="1.100"/><circle cx="12.300" cy="12.500" r="1.150" fill="none" stroke="#8c9db0" stroke-width=".35"/></svg><span class="c c1" style="letter-spacing:-0.206px;">Windows Live ID S<span class="e">...</span></span><span class="c c2">Enabl<span class="e">...</span></span><span class="c c3" style="letter-spacing:-0.271px;">Spuštěno</span><span class="c c4" style="letter-spacing:0.210px;">Automaticky</span><span class="c c5" style="letter-spacing:-0.227px;">Local System</span></div>
<div class="row" style="top:488px"><svg class="gear" width="16" height="16" viewBox="0 0 16 16"><circle cx="6.600" cy="6.600" r="5.750" fill="none" stroke="#8ab2d5" stroke-width="2.100" stroke-dasharray="1.700 1.311" stroke-dashoffset=".85"/><circle cx="6.600" cy="6.600" r="4.050" fill="none" stroke="#c6e2f4" stroke-width="1.900"/><circle cx="6.600" cy="6.600" r="4.950" fill="none" stroke="#a5cbe9" stroke-width=".4"/><circle cx="6.600" cy="6.600" r="3.100" fill="none" stroke="#7d8a98" stroke-width=".7" stroke-opacity=".85"/><circle cx="12.300" cy="12.500" r="2.700" fill="none" stroke="#88aed0" stroke-width="1.400" stroke-dasharray=".95 .746" stroke-dashoffset=".475"/><circle cx="12.300" cy="12.500" r="1.750" fill="none" stroke="#b2d0e8" stroke-width="1.100"/><circle cx="12.300" cy="12.500" r="1.150" fill="none" stroke="#8c9db0" stroke-width=".35"/></svg><span class="c c1" style="letter-spacing:-0.094px;">Windows Live Zab<span class="e">...</span></span><span class="c c2" style="letter-spacing:0.267px;">Tato s<span class="e">...</span></span><span class="c c4" style="letter-spacing:-0.550px;">Ručně</span><span class="c c5" style="letter-spacing:-0.227px;">Local System</span></div>
<div class="row" style="top:507px"><svg class="gear" width="16" height="16" viewBox="0 0 16 16"><circle cx="6.600" cy="6.600" r="5.750" fill="none" stroke="#8ab2d5" stroke-width="2.100" stroke-dasharray="1.700 1.311" stroke-dashoffset=".85"/><circle cx="6.600" cy="6.600" r="4.050" fill="none" stroke="#c6e2f4" stroke-width="1.900"/><circle cx="6.600" cy="6.600" r="4.950" fill="none" stroke="#a5cbe9" stroke-width=".4"/><circle cx="6.600" cy="6.600" r="3.100" fill="none" stroke="#7d8a98" stroke-width=".7" stroke-opacity=".85"/><circle cx="12.300" cy="12.500" r="2.700" fill="none" stroke="#88aed0" stroke-width="1.400" stroke-dasharray=".95 .746" stroke-dashoffset=".475"/><circle cx="12.300" cy="12.500" r="1.750" fill="none" stroke="#b2d0e8" stroke-width="1.100"/><circle cx="12.300" cy="12.500" r="1.150" fill="none" stroke="#8c9db0" stroke-width=".35"/></svg><span class="c c1" style="letter-spacing:-0.087px;">Windows Presenta<span class="e">...</span></span><span class="c c2" style="letter-spacing:0.600px;">Opti<span class="e">...</span></span><span class="c c4" style="letter-spacing:-0.550px;">Ručně</span><span class="c c5" style="letter-spacing:-0.258px;">Local Service</span></div>
<div class="row" style="top:526px"><svg class="gear" width="16" height="16" viewBox="0 0 16 16"><circle cx="6.600" cy="6.600" r="5.750" fill="none" stroke="#8ab2d5" stroke-width="2.100" stroke-dasharray="1.700 1.311" stroke-dashoffset=".85"/><circle cx="6.600" cy="6.600" r="4.050" fill="none" stroke="#c6e2f4" stroke-width="1.900"/><circle cx="6.600" cy="6.600" r="4.950" fill="none" stroke="#a5cbe9" stroke-width=".4"/><circle cx="6.600" cy="6.600" r="3.100" fill="none" stroke="#7d8a98" stroke-width=".7" stroke-opacity=".85"/><circle cx="12.300" cy="12.500" r="2.700" fill="none" stroke="#88aed0" stroke-width="1.400" stroke-dasharray=".95 .746" stroke-dashoffset=".475"/><circle cx="12.300" cy="12.500" r="1.750" fill="none" stroke="#b2d0e8" stroke-width="1.100"/><circle cx="12.300" cy="12.500" r="1.150" fill="none" stroke="#8c9db0" stroke-width=".35"/></svg><span class="c c1" style="letter-spacing:-0.231px;">Windows Search</span><span class="c c2">Posky<span class="e">...</span></span><span class="c c3" style="letter-spacing:-0.271px;">Spuštěno</span><span class="c c4" style="letter-spacing:0.285px;">Automaticky (<span class="e">...</span></span><span class="c c5" style="letter-spacing:-0.227px;">Local System</span></div>
<div class="abs" style="left:139px;top:546px;width:16px;height:2px;overflow:hidden"><svg width="16" height="16" viewBox="0 0 16 16" style="display:block"><circle cx="6.600" cy="6.600" r="5.750" fill="none" stroke="#8ab2d5" stroke-width="2.100" stroke-dasharray="1.700 1.311" stroke-dashoffset=".85"/><circle cx="6.600" cy="6.600" r="4.050" fill="none" stroke="#c6e2f4" stroke-width="1.900"/><circle cx="6.600" cy="6.600" r="4.950" fill="none" stroke="#a5cbe9" stroke-width=".4"/><circle cx="6.600" cy="6.600" r="3.100" fill="none" stroke="#7d8a98" stroke-width=".7" stroke-opacity=".85"/><circle cx="12.300" cy="12.500" r="2.700" fill="none" stroke="#88aed0" stroke-width="1.400" stroke-dasharray=".95 .746" stroke-dashoffset=".475"/><circle cx="12.300" cy="12.500" r="1.750" fill="none" stroke="#b2d0e8" stroke-width="1.100"/><circle cx="12.300" cy="12.500" r="1.150" fill="none" stroke="#8c9db0" stroke-width=".35"/></svg></div>
<div id="vscroll" class="abs"></div>
<svg class="abs" style="left:799px;top:91px" width="7" height="4" viewBox="0 0 7 4"><path d="M0 4 L3.500 0.300 L7 4 Z" fill="url(#arv)"/></svg>
<svg class="abs" style="left:799px;top:538px" width="7" height="4" viewBox="0 0 7 4"><path d="M0 0 L3.500 3.700 L7 0 Z" fill="url(#arv)"/></svg>
<div id="vthumb" class="abs"></div>
<div class="grip" style="top:472px"></div><div class="grip" style="top:475px"></div><div class="grip" style="top:478px"></div>
<div id="hscroll" class="abs"></div>
<svg class="abs" style="left:16px;top:555px" width="4" height="7" viewBox="0 0 4 7"><path d="M4 0 L0.300 3.500 L4 7 Z" fill="url(#arh)"/></svg>
<svg class="abs" style="left:118px;top:555px" width="4" height="7" viewBox="0 0 4 7"><path d="M0 0 L3.700 3.500 L0 7 Z" fill="url(#arh)"/></svg>
<div id="hthumb" class="abs"></div>
<div class="vgrip" style="left:57px"></div><div class="vgrip" style="left:60px"></div><div class="vgrip" style="left:63px"></div>
<div id="tabs" class="abs"></div>
<svg class="abs" style="left:133px;top:549px" width="679" height="21" viewBox="0 0 679 21">
 <path d="M67.700 1 L146.300 1 L138.400 19.500 L75.400 19.500 Z" fill="#fff"/>
 <path d="M0 1.500 L68 1.500 M146 1.500 L679 1.500" fill="none" stroke="#62676e" stroke-width="1"/>
 <path d="M1 1.500 L8.500 19.500 L66.500 19.500 L70.500 10" fill="none" stroke="#5a5a5a" stroke-width="1"/>
 <path d="M67.700 1.500 L75.400 19.500 L138.400 19.500 L146.200 1.500" fill="none" stroke="#5a5a5a" stroke-width="1"/>
</svg>
<span class="tab" style="left:145px;letter-spacing:-.5px">Rozšířené</span>
<span class="tab" style="left:211px;letter-spacing:-.17px">Standardní</span>
<div id="botline" class="abs"></div>
<div id="botline2" class="abs"></div>
<div id="status" class="abs"></div>
<div class="ssep" style="left:591px"></div>
<div class="ssep" style="left:724px"></div>
<div class="ssep" style="left:809px"></div>
</body></html>
